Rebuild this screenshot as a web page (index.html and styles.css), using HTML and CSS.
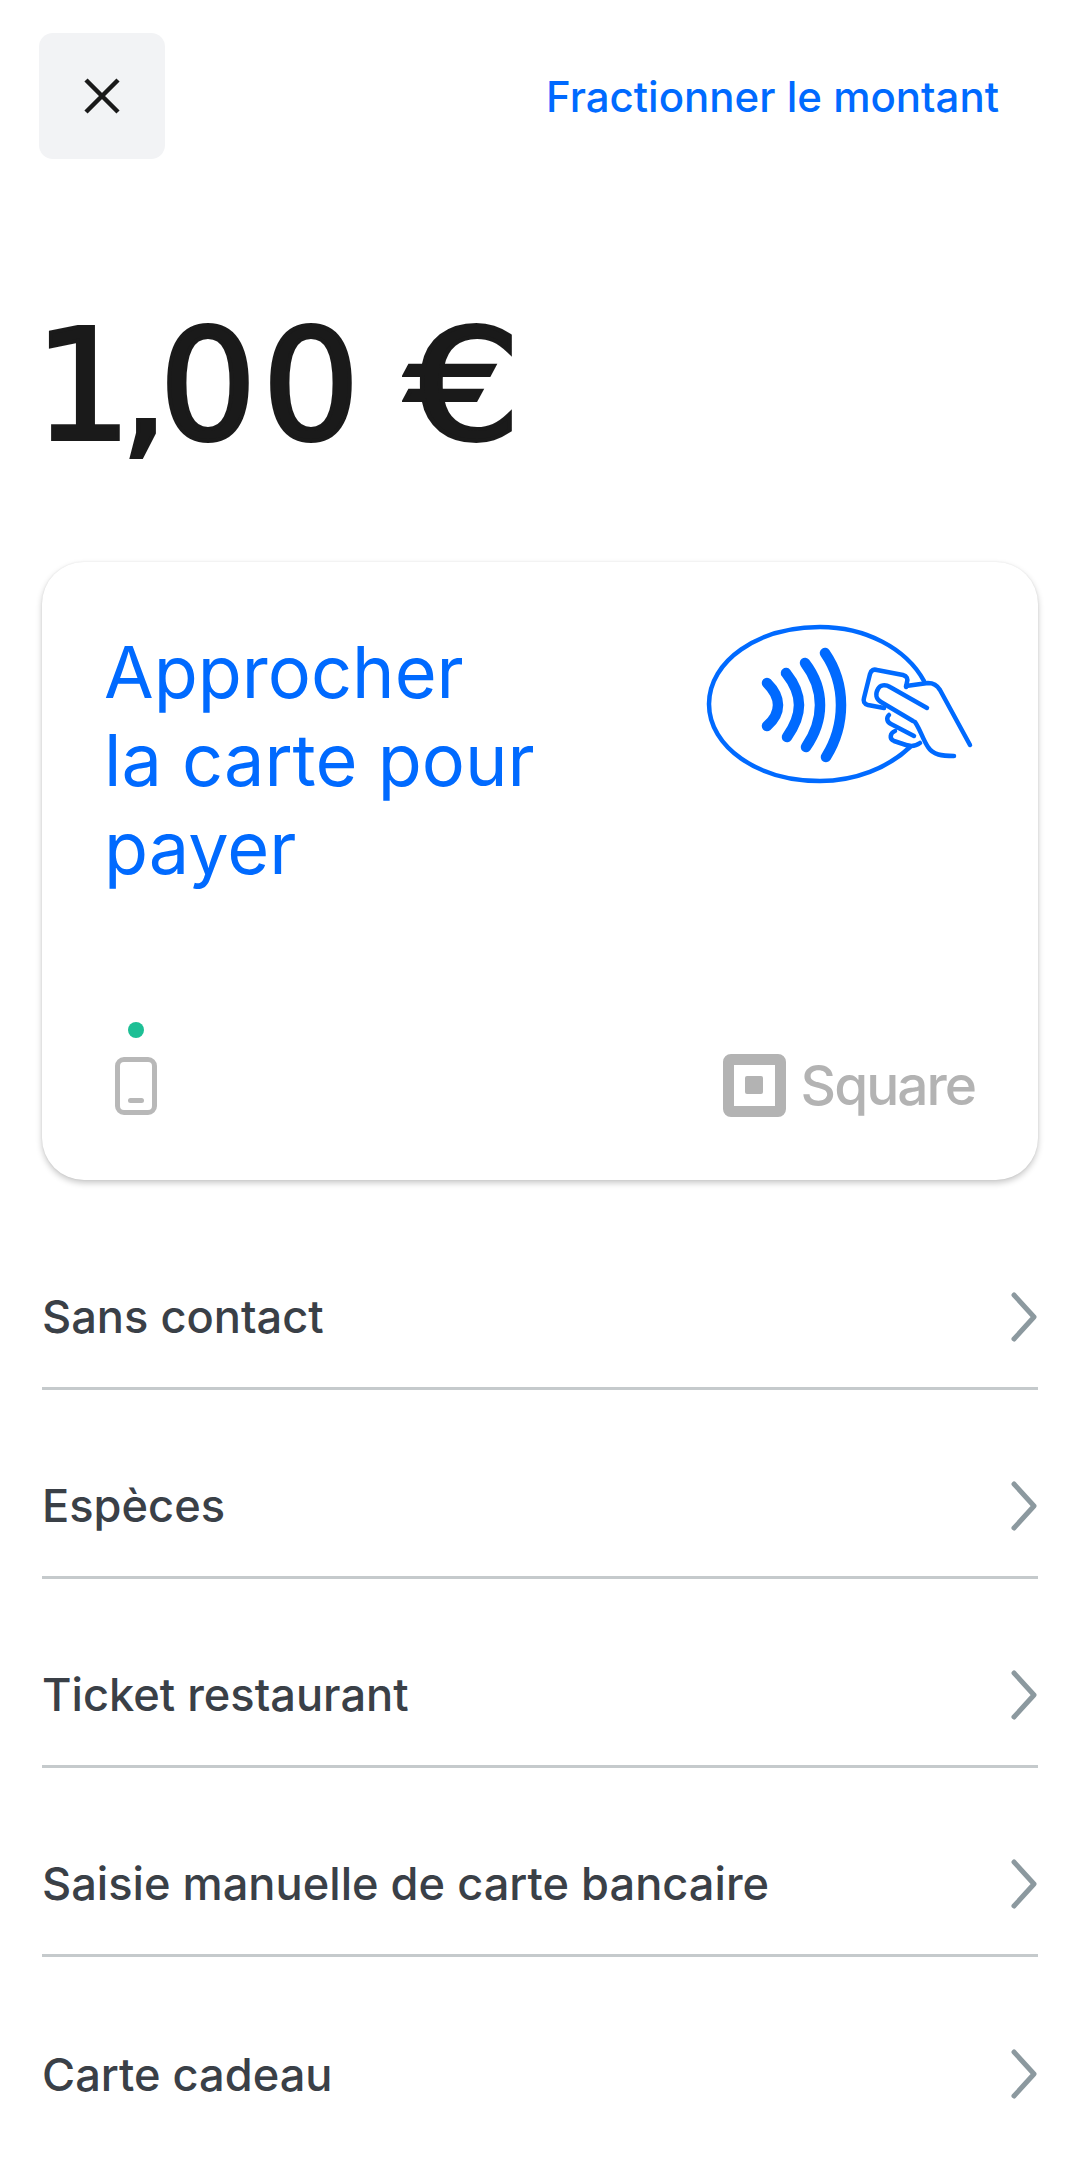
FILE: index.html
```html
<!DOCTYPE html>
<html lang="fr">
<head>
    <meta charset="UTF-8">
    <meta name="viewport" content="width=device-width, initial-scale=1.0">
    <title>Paiement</title>
    <link rel="stylesheet" href="styles.css">
</head>
<body>
    <div class="page">
        <header class="top-bar">
            <button class="close-btn" aria-label="Fermer">
                <svg class="close-icon" viewBox="0 0 36 36">
                    <path d="M2 2 34 34M34 2 2 34"/>
                </svg>
            </button>
            <a class="split-link">Fractionner le montant</a>
        </header>

        <h1 class="amount"><span class="amount-unit">1</span><span class="amount-comma">,</span>00 <span class="amount-currency">€</span></h1>

        <section class="tap-card">
            <div class="tap-head">
                <h2 class="tap-title">Approcher<br>la carte pour<br>payer</h2>
                <svg class="nfc-icon" viewBox="0 0 340 210">
                    <path class="thin" d="M264 81C246 48 205 27 160 27 98 27 49 61 49 104S98 181 160 181C195 181 228 168 250 147"/>
                    <path class="wave" d="M107 83C114 90 118 97 118 105 118 113 114 120 107 126"/>
                    <path class="wave" d="M126 73C134 83 139 94 139 105 139 116 134 127 127 137"/>
                    <path class="wave" d="M145 63C155 76 160 90 160 105 160 120 155 134 146 147"/>
                    <path class="wave" d="M165 53C176 69 181 87 181 105 181 123 176 141 166 157"/>
                    <path class="thin" d="M224 108 208 105C204 104 203 101 204 98L210 74C211 70 214 69 217 70L243 75C247 76 248 79 247 82L246 87"/>
                    <path class="thin" d="M267 108 230 87C225 84 220 85 218 89 215 94 216 99 221 102L253 121"/>
                    <path class="thin" d="M229 115C226 118 227 122 231 124L254 136M235 131C230 133 229 139 234 141L246 145C252 147 256 146 260 143"/>
                    <path class="thin" d="M246 86 268 83C273 83 277 85 280 90L310 145M255 122C261 131 263 140 268 147 273 155 282 156 294 156"/>
                </svg>
            </div>
            <div class="tap-foot">
                <div class="reader-status">
                    <span class="status-dot"></span>
                    <span class="phone-icon"><span class="phone-bar"></span></span>
                </div>
                <div class="brand">
                    <span class="brand-mark"><span class="brand-core"></span></span>
                    <span class="brand-name">Square</span>
                </div>
            </div>
        </section>

        <ul class="pay-list">
            <li class="pay-row"><span>Sans contact</span><svg class="chevron" viewBox="0 0 26 50"><path d="M3 3 23 25 3 47"/></svg></li>
            <li class="pay-row"><span>Espèces</span><svg class="chevron" viewBox="0 0 26 50"><path d="M3 3 23 25 3 47"/></svg></li>
            <li class="pay-row"><span>Ticket restaurant</span><svg class="chevron" viewBox="0 0 26 50"><path d="M3 3 23 25 3 47"/></svg></li>
            <li class="pay-row"><span>Saisie manuelle de carte bancaire</span><svg class="chevron" viewBox="0 0 26 50"><path d="M3 3 23 25 3 47"/></svg></li>
            <li class="pay-row"><span>Carte cadeau</span><svg class="chevron" viewBox="0 0 26 50"><path d="M3 3 23 25 3 47"/></svg></li>
        </ul>
    </div>
</body>
</html>
```
FILE: styles.css
```css
*, *::before, *::after {
    box-sizing: border-box;
}

html, body {
    margin: 0;
    background-color: #fff;
}

body {
    font-family: Inter, "Liberation Sans", sans-serif;
    overflow: hidden;
}

.page {
    height: 2161px;
    padding: 33px 42px 0;
    overflow: hidden;
}

.top-bar {
    display: flex;
    justify-content: space-between;
    align-items: center;
    margin-left: -3px;
    padding-right: 39px;
}

.close-btn {
    display: flex;
    justify-content: center;
    align-items: center;
    width: 126px;
    height: 126px;
    padding: 0;
    border: 0;
    border-radius: 14px;
    background-color: #f2f3f5;
}

.close-icon {
    width: 36px;
    height: 36px;
    fill: none;
    stroke: #1a1a1a;
    stroke-width: 4.5;
}

.split-link {
    font-size: 42px;
    font-weight: 500;
    color: #006aff;
}

.amount {
    margin: 139px 0 0 -8px;
    font-family: "DejaVu Sans", sans-serif;
    font-size: 154px;
    line-height: 176px;
    font-weight: 400;
    letter-spacing: 5px;
    word-spacing: -14px;
    -webkit-text-stroke: 4px #1a1a1a;
    color: #1a1a1a;
}

.amount-unit {
    letter-spacing: -12px;
}

.amount-comma {
    letter-spacing: -10px;
}

.amount-currency {
    display: inline-block;
    transform: scaleX(1.19);
    transform-origin: left center;
}

.tap-card {
    display: flex;
    flex-direction: column;
    justify-content: space-between;
    height: 618px;
    margin-top: 88px;
    padding: 66px 65px 62px 62px;
    border-radius: 42px;
    background-color: #fff;
    box-shadow: 0 3px 6px rgba(0, 0, 0, 0.22), 0 0 2px rgba(0, 0, 0, 0.08);
}

.tap-head {
    position: relative;
    display: flex;
    justify-content: space-between;
}

.tap-title {
    margin: 0;
    font-size: 72px;
    line-height: 88px;
    font-weight: 400;
    color: #006aff;
}

.nfc-icon {
    position: absolute;
    top: -28px;
    right: -27px;
    width: 340px;
    height: 210px;
    fill: none;
    stroke: #006aff;
    stroke-linecap: round;
    stroke-linejoin: round;
}

.thin {
    stroke-width: 4.5;
}

.wave {
    stroke-width: 10.5;
}

.tap-foot {
    display: flex;
    justify-content: space-between;
    align-items: flex-end;
}

.reader-status {
    display: flex;
    flex-direction: column;
    align-items: center;
    gap: 19px;
    margin-left: 11px;
    margin-bottom: 3px;
}

.status-dot {
    width: 16px;
    height: 16px;
    border-radius: 50%;
    background-color: #1dbf95;
}

.phone-icon {
    display: flex;
    justify-content: center;
    align-items: flex-end;
    width: 42px;
    height: 58px;
    padding-bottom: 7px;
    border: 5px solid #b8b8b8;
    border-radius: 9px;
}

.phone-bar {
    width: 16px;
    height: 5px;
    border-radius: 3px;
    background-color: #b8b8b8;
}

.brand {
    display: flex;
    align-items: center;
    gap: 15px;
    margin-right: -2px;
}

.brand-mark {
    display: flex;
    justify-content: center;
    align-items: center;
    width: 63px;
    height: 63px;
    border: 11px solid #b3b3b3;
    border-radius: 8px;
}

.brand-core {
    width: 18px;
    height: 18px;
    border-radius: 2px;
    background-color: #b3b3b3;
}

.brand-name {
    font-size: 55px;
    font-weight: 500;
    letter-spacing: -2px;
    color: #b3b3b3;
}

.pay-list {
    margin: 21px 0 0;
    padding: 0;
    list-style: none;
}

.pay-row {
    display: flex;
    justify-content: space-between;
    align-items: center;
    height: 189px;
    padding-top: 45px;
    border-bottom: 3px solid #c5cacc;
    font-size: 45.2px;
    font-weight: 500;
    color: #3a4047;
}

.pay-row:last-child {
    border-bottom: 0;
}

.chevron {
    width: 28px;
    height: 50px;
    fill: none;
    stroke: #8c999f;
    stroke-width: 5;
    stroke-linecap: round;
    stroke-linejoin: round;
}
```
